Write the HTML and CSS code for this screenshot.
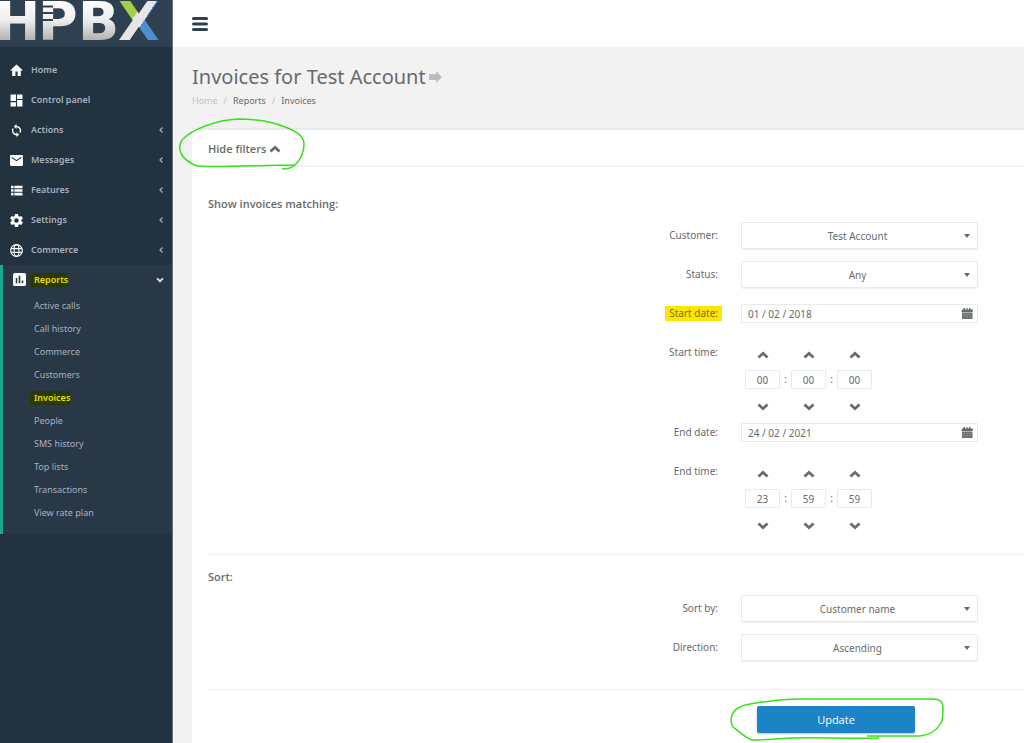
FILE: index.html
```html
<!DOCTYPE html>
<html lang="en">
<head>
<meta charset="utf-8">
<title>Invoices for Test Account</title>
<link rel="stylesheet" href="styles.css">
</head>
<body>
<svg class="sprite" aria-hidden="true">
  <symbol id="up" viewBox="0 0 12 8"><path d="M1.500 6.500 6 2.300l4.500 4.200" fill="none" stroke="currentColor" stroke-width="2.800"/></symbol>
  <symbol id="down" viewBox="0 0 12 8"><path d="M1.500 1.500 6 5.700l4.500-4.200" fill="none" stroke="currentColor" stroke-width="2.800"/></symbol>
  <symbol id="left" viewBox="0 0 6 8"><path d="M4.500 1.500 2 4l2.500 2.500" fill="none" stroke="currentColor" stroke-width="1.200"/></symbol>
  <symbol id="calendar" viewBox="0 0 12 12"><path d="M1 1.500h1.500V0H4v1.500h1.500V0h1.200v1.500H8V0h1.500v1.500H12L11.500 4H.5zM1 4.600h10.500V11H1z" fill="currentColor"/><path d="M1 6.500h10.500M1 8.700h10.500M3.500 5v6M6.200 5v6M8.900 5v6" stroke="#fff" stroke-width=".3" opacity=".5"/></symbol>
</svg>
<div class="app">
  <aside class="sidebar">
    <a class="logo" href="#" aria-label="HPBX">
      <svg width="172" height="47" viewBox="0 0 172 47">
        <defs>
          <linearGradient id="silver" gradientUnits="userSpaceOnUse" x1="0" y1="0" x2="0" y2="40"><stop offset="0" stop-color="#fff"/><stop offset=".5" stop-color="#eee"/><stop offset="1" stop-color="#b4b2b2"/></linearGradient>
          <linearGradient id="cross" gradientUnits="userSpaceOnUse" x1="121" y1="9" x2="155" y2="31"><stop offset=".37" stop-color="#a6ce4b"/><stop offset=".37" stop-color="#e6e6e6"/><stop offset=".63" stop-color="#e6e6e6"/><stop offset=".63" stop-color="#4e8fd0"/></linearGradient>
        </defs>
        <g class="logo-text"><text x="-5" y="40">H</text><text x="38" y="40">P</text><text x="78" y="40">B</text><text class="logo-cross" x="118" y="40">X</text></g>
        <path d="M42 6.500h11M42 13h11M42 20h11" stroke="#2f4050" stroke-width="2"/>
      </svg>
    </a>
    <nav class="nav">
      <a class="item" href="#"><svg class="icon" viewBox="0 0 24 24"><path d="M10 22v-8h4v8h6V12h4L12 1 0 12h4v10z"/></svg>Home</a>
      <a class="item" href="#"><svg class="icon" viewBox="0 0 24 24"><path d="M1 1h10v12H1zM1 15h10v8H1zM13 11h10v12H13zM13 1h10v8H13z"/></svg>Control panel</a>
      <a class="item" href="#"><svg class="icon" viewBox="1 0 22 24"><path d="M12 3V0L7 4.500 12 9V6a6 6 0 0 1 5.300 8.800l2 2A9 9 0 0 0 12 3zm0 15a6 6 0 0 1-5.300-8.800l-2-2A9 9 0 0 0 12 21v3l5-4.500-5-4.500z"/></svg>Actions<svg class="caret"><use href="#left"/></svg></a>
      <a class="item" href="#"><svg class="icon" viewBox="0 0 24 24"><path d="M2 2h20a2 2 0 0 1 2 2v16a2 2 0 0 1-2 2H2a2 2 0 0 1-2-2V4a2 2 0 0 1 2-2zm1 3v2.500l9 6 9-6V5l-9 6z"/></svg>Messages<svg class="caret"><use href="#left"/></svg></a>
      <a class="item" href="#"><svg class="icon" viewBox="0 0 24 24"><path d="M2 3h4.500v5H2zM8 3h15v5H8zM2 9.500h4.500v5H2zM8 9.500h15v5H8zM2 16h4.500v5H2zM8 16h15v5H8z"/></svg>Features<svg class="caret"><use href="#left"/></svg></a>
      <a class="item" href="#"><svg class="icon" viewBox="2 2 20 20"><path d="M19.430 12.980a8 8 0 0 0 0-1.960l2.110-1.650a.5.5 0 0 0 .12-.64l-2-3.460a.5.5 0 0 0-.61-.22l-2.490 1a7.300 7.300 0 0 0-1.690-.98l-.38-2.650A.5.500 0 0 0 14 2h-4a.5.500 0 0 0-.49.420l-.38 2.650c-.61.250-1.170.59-1.690.98l-2.490-1a.5.500 0 0 0-.61.220l-2 3.460a.5.500 0 0 0 .12.640l2.110 1.650a8 8 0 0 0 0 1.960l-2.110 1.650a.5.500 0 0 0-.12.640l2 3.460c.12.220.39.300.61.220l2.490-1c.52.400 1.080.73 1.690.98l.38 2.650c.3.240.24.420.49.420h4c.25 0 .46-.18.490-.42l.38-2.650a7.300 7.300 0 0 0 1.690-.98l2.490 1c.23.090.49 0 .61-.22l2-3.460a.5.500 0 0 0-.12-.64zM12 15.500a3.500 3.500 0 1 1 0-7 3.500 3.500 0 0 1 0 7z"/></svg>Settings<svg class="caret"><use href="#left"/></svg></a>
      <a class="item" href="#"><svg class="icon line" viewBox="0 0 24 24"><circle cx="12" cy="12" r="10.800"/><ellipse cx="12" cy="12" rx="4.500" ry="10.800"/><path d="M2 8.500h20M2 15.500h20"/></svg>Commerce<svg class="caret"><use href="#left"/></svg></a>
      <div class="group">
        <a class="item open" href="#"><svg class="icon" viewBox="0 0 24 24"><path d="M3 0h18a3 3 0 0 1 3 3v18a3 3 0 0 1-3 3H3a3 3 0 0 1-3-3V3a3 3 0 0 1 3-3zm2 9v10h3V9zm5.500-4v14h3V5zm5.500 9v5h3v-5z"/></svg><span class="marked">Reports</span><svg class="caret wide"><use href="#down"/></svg></a>
        <ul class="sub">
          <li><a href="#">Active calls</a></li>
          <li><a href="#">Call history</a></li>
          <li><a href="#">Commerce</a></li>
          <li><a href="#">Customers</a></li>
          <li><a class="marked" href="#">Invoices</a></li>
          <li><a href="#">People</a></li>
          <li><a href="#">SMS history</a></li>
          <li><a href="#">Top lists</a></li>
          <li><a href="#">Transactions</a></li>
          <li><a href="#">View rate plan</a></li>
        </ul>
      </div>
    </nav>
  </aside>
  <main class="main">
    <header class="topbar">
      <button class="plain menu" type="button" aria-label="Toggle menu"><svg width="17" height="16" viewBox="0 0 17 16"><path d="M2.500 2.500h13M2.500 8h13M2.500 13.500h13" stroke="#2f4050" stroke-width="3" stroke-linecap="round"/></svg></button>
    </header>
    <div class="heading">
      <h1>Invoices for Test Account<svg width="13" height="12" viewBox="0 0 13 12"><path d="M0 3h7V0l6 6-6 6V9H0z" fill="#bdbdbd"/></svg></h1>
      <nav class="crumbs" aria-label="Breadcrumb"><a class="faint" href="#">Home</a><span>/</span><a href="#">Reports</a><span>/</span><a href="#">Invoices</a></nav>
    </div>
    <section class="panel">
      <div class="panel-head">
        <button class="plain toggle" type="button">Hide filters <svg class="chev"><use href="#up"/></svg></button>
        <svg class="ring ring-filters" viewBox="0 0 130 56"><path d="M105 53Q114 53 118 49C125 42 127 34 127 28C127 19 118 15 108 11C92 4 75 3 61 3C40 4 15 13 5 24C-1 34 5 44 20 50C40 52 85 49 118 49"/></svg>
      </div>
      <form class="form">
        <fieldset>
          <legend>Show invoices matching:</legend>
          <div class="row"><label for="customer">Customer:</label><span class="select"><select id="customer"><option>Test Account</option></select></span></div>
          <div class="row"><label for="status">Status:</label><span class="select"><select id="status"><option>Any</option></select></span></div>
          <div class="row"><label for="sdate"><span class="highlight">Start date:</span></label><span class="date"><input id="sdate" type="text" value="01 / 02 / 2018"><button class="plain" type="button" aria-label="Pick start date"><svg><use href="#calendar"/></svg></button></span></div>
          <div class="row tall"><label for="sh">Start time:</label>
            <div class="time">
              <button class="plain" type="button" aria-label="Hour up"><svg class="chev"><use href="#up"/></svg></button><i></i><button class="plain" type="button" aria-label="Minute up"><svg class="chev"><use href="#up"/></svg></button><i></i><button class="plain" type="button" aria-label="Second up"><svg class="chev"><use href="#up"/></svg></button>
              <input id="sh" type="text" value="00"><span>:</span><input type="text" aria-label="Start minute" value="00"><span>:</span><input type="text" aria-label="Start second" value="00">
              <button class="plain" type="button" aria-label="Hour down"><svg class="chev"><use href="#down"/></svg></button><i></i><button class="plain" type="button" aria-label="Minute down"><svg class="chev"><use href="#down"/></svg></button><i></i><button class="plain" type="button" aria-label="Second down"><svg class="chev"><use href="#down"/></svg></button>
            </div>
          </div>
          <div class="row"><label for="edate">End date:</label><span class="date"><input id="edate" type="text" value="24 / 02 / 2021"><button class="plain" type="button" aria-label="Pick end date"><svg><use href="#calendar"/></svg></button></span></div>
          <div class="row tall"><label for="eh">End time:</label>
            <div class="time">
              <button class="plain" type="button" aria-label="Hour up"><svg class="chev"><use href="#up"/></svg></button><i></i><button class="plain" type="button" aria-label="Minute up"><svg class="chev"><use href="#up"/></svg></button><i></i><button class="plain" type="button" aria-label="Second up"><svg class="chev"><use href="#up"/></svg></button>
              <input id="eh" type="text" value="23"><span>:</span><input type="text" aria-label="End minute" value="59"><span>:</span><input type="text" aria-label="End second" value="59">
              <button class="plain" type="button" aria-label="Hour down"><svg class="chev"><use href="#down"/></svg></button><i></i><button class="plain" type="button" aria-label="Minute down"><svg class="chev"><use href="#down"/></svg></button><i></i><button class="plain" type="button" aria-label="Second down"><svg class="chev"><use href="#down"/></svg></button>
            </div>
          </div>
        </fieldset>
        <fieldset class="sort">
          <legend>Sort:</legend>
          <div class="row"><label for="sortby">Sort by:</label><span class="select"><select id="sortby"><option>Customer name</option></select></span></div>
          <div class="row"><label for="direction">Direction:</label><span class="select"><select id="direction"><option>Ascending</option></select></span></div>
        </fieldset>
        <div class="actions">
          <div class="submit">
            <button class="update" type="submit">Update</button>
            <svg class="ring ring-update" viewBox="0 0 220 47"><path d="M139 40H150V42C120 43 90 41 64 42C50 43 35 44 24 44C18 42 10 35 5 31C2 27 3 20 5 17C8 12 14 9 22 8C40 5 55 3 72 3H204C213 3 215 6 215 12C215 18 215 23 213 27C209 34 202 39 192 40H150"/></svg>
          </div>
        </div>
      </form>
    </section>
  </main>
</div>
</body>
</html>
```
FILE: styles.css
```css
* { box-sizing: border-box; }
body { margin: 0; background: #f2f2f2; color: #676a6c; font: 11px/20px "Open Sans", sans-serif; }
a { color: inherit; text-decoration: none; }
button, input, select { font: inherit; color: inherit; }
.sprite { position: absolute; width: 0; height: 0; }
.plain { display: flex; align-items: center; justify-content: center; padding: 0; border: 0; background: none; }
.app { display: flex; min-height: 100vh; }

.sidebar { flex: 0 0 173px; background: #22333f; border-right: 1px solid #66747e; color: #a7b1c2; font-size: 10px; }
.logo { display: block; height: 47px; background: #2f4050; overflow: hidden; }
.logo svg { display: block; }
.logo-text { font: 700 54px "DejaVu Sans", sans-serif; fill: url(#silver); }
.logo-cross { fill: url(#cross); }
.nav { padding-top: 8px; }
.item { display: flex; align-items: center; height: 30px; padding: 0 8px 0 10px; font-size: 9px; font-family: "Noto Sans", sans-serif; font-weight: 600; }
.icon { width: 13px; height: 13px; margin-right: 8px; fill: #fff; }
.icon.line { fill: none; stroke: #fff; stroke-width: 2; }
.caret { width: 6px; height: 8px; margin-left: auto; }
.caret.wide { width: 8px; height: 6px; color: #dfe4ea; }
.group { padding-bottom: 10px; background: #293846; border-left: 3px solid #19aa8d; }
.open { height: 29px; }
.marked { color: #e6df00; background: #2b3808; font-weight: 600; line-height: 14px; }
.open .marked { margin-left: -4px; padding-left: 4px; }
.sub { margin: 0; padding: 0; list-style: none; font-family: "Noto Sans", sans-serif; font-size: 9px; }
.sub li { height: 23px; padding-left: 31px; line-height: 23px; }
.sub .marked { display: inline-block; margin-left: -4px; padding-left: 4px; }

.main { flex: 1; min-width: 0; display: flex; flex-direction: column; }
.topbar { display: flex; align-items: center; height: 47px; padding-left: 18px; background: #fff; }
.heading { padding: 15px 20px 17px 19px; }
h1 { display: flex; align-items: center; gap: 3px; margin: 0; font: 400 20px/29px "Noto Sans", sans-serif; }
.crumbs { display: flex; gap: 6px; font-family: "Noto Sans", sans-serif; font-size: 9px; }
.crumbs span, .faint { color: #bfc1c3; }

.panel { flex: 1; margin-left: 19px; background: #fff; border-top: 2px solid #e7eaec; }
.panel-head { position: relative; display: flex; align-items: center; height: 37px; padding: 2px 0 0 16px; border-bottom: 2px solid #f3f4f5; }
.toggle { gap: 3px; font-weight: 600; }
.chev { width: 12px; height: 8px; }
.ring { position: absolute; fill: none; stroke: #39e01c; stroke-width: 1.5; pointer-events: none; }
.ring-filters { left: -15px; top: -14px; width: 130px; height: 56px; }
.form { padding: 27px 0 0 16px; }
fieldset { margin: 0; padding: 0; border: 0; min-width: 0; }
legend { padding: 0; margin-bottom: 2px; font-weight: 600; }
.row { display: grid; grid-template-columns: minmax(0, 1fr) 237px; column-gap: 23px; align-items: center; height: 39px; padding: 6px 46px 6px 0; font-family: "Noto Sans", sans-serif; font-size: 10px; }
.row label { text-align: right; line-height: 27px; }
.row.tall { height: 80px; padding-bottom: 0; align-items: start; }
.highlight { display: inline-block; margin-right: -4px; padding: 0 4px; background: #ffe600; color: #7a6f1c; line-height: 15px; }
.select { position: relative; display: block; }
.select::after { content: ""; position: absolute; right: 8px; top: 12px; border: 3px solid transparent; border-top: 4px solid #676a6c; border-bottom: 0; }
select { appearance: none; display: block; width: 100%; height: 27px; padding: 0 12px 0 8px; border: 1px solid #e7eaec; border-radius: 2px; background: #fff; text-align: center; text-align-last: center; box-shadow: 0 1px 1px #f1f1f1; }
input { height: 19px; padding: 0; border: 1px solid #e7eaec; border-radius: 1px; background: #fff; }
.date { display: flex; align-items: center; height: 19px; border: 1px solid #e7eaec; border-radius: 1px; padding: 0 4px 0 6px; }
.date input { flex: 1; min-width: 0; height: 17px; border: 0; }
.date svg { width: 12px; height: 12px; }
.time { display: grid; grid-template-columns: 35px 11px 35px 11px 35px; grid-template-rows: 31px 19px 24px; padding-left: 4px; }
.time button:nth-of-type(n + 4) { padding-top: 12px; }
.time input { width: 100%; text-align: center; }
.time span { text-align: center; line-height: 19px; }
.sort { margin-top: 22px; padding-top: 12px; border-top: 1px solid #eeeff0; }
.sort legend { float: left; width: 100%; margin-bottom: 2px; }
.sort .row { clear: both; }
.actions { display: flex; justify-content: flex-end; margin-top: 22px; padding: 16px 109px 10px 0; border-top: 1px solid #eeeff0; }
.submit { position: relative; }
.update { display: block; width: 158px; height: 27px; padding: 0; border: 0; border-radius: 2px; background: #1c84c6; color: #fff; font-size: 11px; box-shadow: 0 1px 2px #bbb; }
.ring-update { left: -29px; top: -10px; width: 220px; height: 47px; }
```
